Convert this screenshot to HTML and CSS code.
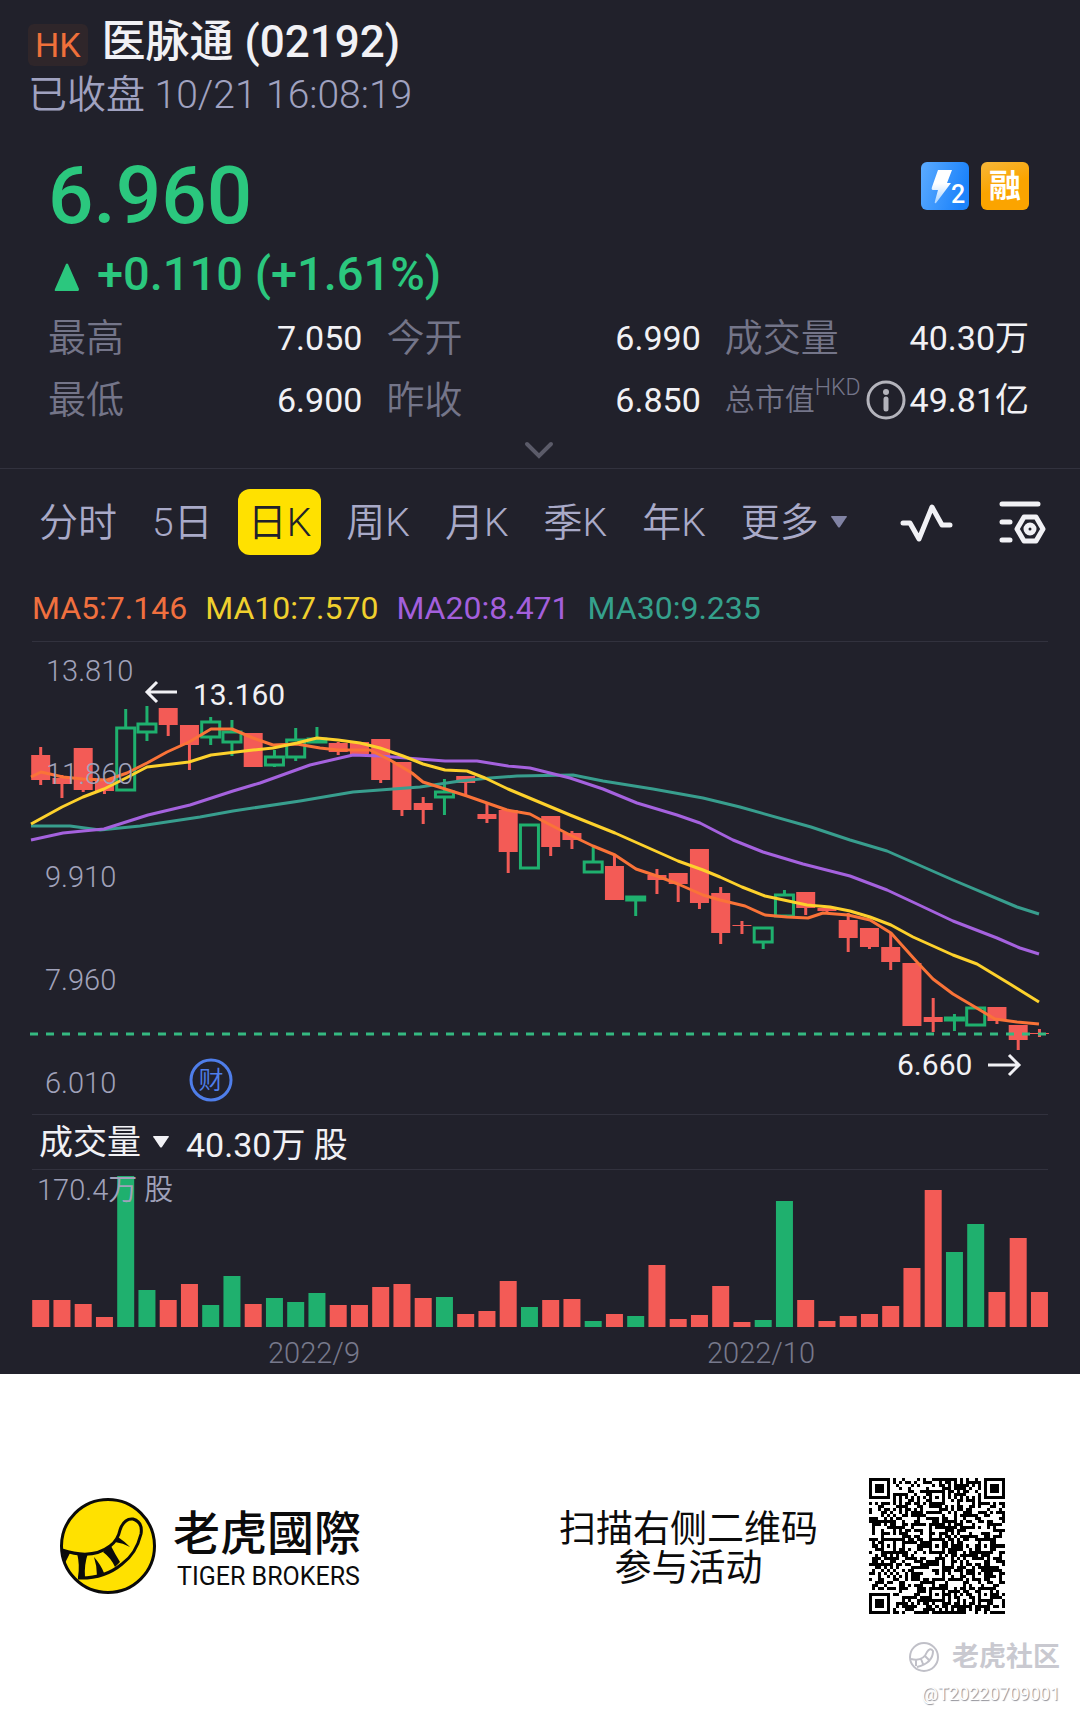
FILE: index.html
```
<!DOCTYPE html>
<html lang="zh-CN">
<head>
  <meta charset="UTF-8">
  <meta name="viewport" content="width=device-width, initial-scale=1.0">
  <title>医脉通 (02192)</title>
  <link rel="stylesheet" href="styles.css">
</head>
<body>
  <main class="quote">
    <header class="stock-header">
      <div class="stock-title">
        <span class="market">HK</span>
        <h1>医脉通 (02192)</h1>
      </div>
      <p class="stock-status">已收盘 10/21 16:08:19</p>
    </header>

    <section class="summary">
      <div class="price-row">
        <p class="price">6.960</p>
        <div class="badges">
          <svg class="badge" viewBox="0 0 48 48" role="img" aria-label="Level 2">
            <defs>
              <linearGradient id="blueBadge" x1="0" y1="0" x2="1" y2="0.3">
                <stop offset="0" stop-color="#5cabff"/>
                <stop offset="1" stop-color="#1c83fb"/>
              </linearGradient>
              <linearGradient id="boltFill" x1="0" y1="0" x2="0" y2="1">
                <stop offset="0.4" stop-color="#fff"/>
                <stop offset="1" stop-color="#a9d3ff"/>
              </linearGradient>
            </defs>
            <rect width="48" height="48" rx="6" fill="url(#blueBadge)"/>
            <path d="M17 8h14l-5 13h4L15 41q-2 1-1-2l3-11h-5q-2 0-1-3z" fill="url(#boltFill)"/>
            <text class="badge-digit" x="30" y="41">2</text>
          </svg>
          <span class="badge margin-badge">融</span>
        </div>
      </div>
      <p class="change">
        <svg class="up" viewBox="0 0 26 28" aria-hidden="true"><path d="M12 1q1-1 2 0l11 25q0 2-1 2H2q-2 0-1-2z"/></svg>
        +0.110 (+1.61%)
      </p>
      <dl class="stats">
        <div><dt>最高</dt><dd>7.050</dd></div>
        <div><dt>今开</dt><dd>6.990</dd></div>
        <div><dt>成交量</dt><dd>40.30万</dd></div>
        <div><dt>最低</dt><dd>6.900</dd></div>
        <div><dt>昨收</dt><dd>6.850</dd></div>
        <div>
          <dt class="market-cap">总市值<sup>HKD</sup></dt>
          <dd>
            <svg class="info" viewBox="0 0 40 40" aria-hidden="true">
              <circle cx="20" cy="20" r="18" fill="none" stroke="#b4b4bc" stroke-width="3"/>
              <circle cx="20" cy="12" r="3" fill="#b4b4bc"/>
              <path d="M20 19v10" stroke="#b4b4bc" stroke-width="5" stroke-linecap="round"/>
            </svg>49.81亿
          </dd>
        </div>
      </dl>
      <button class="expand" aria-label="展开">
        <svg viewBox="0 0 30 18"><path d="M3 3l12 12L27 3"/></svg>
      </button>
    </section>

    <nav class="toolbar">
      <div class="tabs">
        <button>分时</button>
        <button>5日</button>
        <button class="active">日K</button>
        <button>周K</button>
        <button>月K</button>
        <button>季K</button>
        <button>年K</button>
        <button aria-haspopup="true">更多<svg class="caret" viewBox="0 0 16 12"><path d="M1 0h14q2 0 0 2L9 11q-1 1-2 0L1 2Q-1 0 1 0z"/></svg></button>
      </div>
      <div class="tools">
        <button aria-label="指标">
          <svg viewBox="0 0 54 46"><path d="M3 24h7l9 16L32 8l10 18h8"/></svg>
        </button>
        <button aria-label="设置">
          <svg viewBox="0 0 48 46">
            <path d="M3 5h36M3 23h8M3 41h8M25 18h12l7 12-7 12H25l-7-12z"/>
            <circle cx="31" cy="30" r="4"/>
          </svg>
        </button>
      </div>
    </nav>

    <section class="charts">
      <ul class="averages">
        <li class="ma5">MA5:7.146</li>
        <li class="ma10">MA10:7.570</li>
        <li class="ma20">MA20:8.471</li>
        <li class="ma30">MA30:9.235</li>
      </ul>

      <svg class="chart" viewBox="32 642 1016 472" role="img" aria-label="日K">
        <g id="candles"></g>
        <g class="lines">
          <polyline class="line30" points="31,826 70,826 100,830 140,826 200,817 233,811 300,801 353,792 420,787 460,781 490,778 517,776 573,775 603,781 653,789 703,798 740,807 811,827 850,840 887,851 953,880 1017,907 1039,914"/>
          <polyline class="line20" points="31,840 63,833 83,831 104,829 148,815 190,805 233,791 260,783 310,765 353,755 380,756 445,761 477,761 508,766 530,768 570,778 603,789 637,803 677,815 700,823 733,840 763,852 803,864 850,876 887,890 917,904 953,921 997,938 1020,948 1039,954"/>
          <polyline class="line5" points="31,777 41,772 63,777 83,779 107,780 127,773 147,763 167,752 189,742 211,729 232,729 253,738 273,745 297,744 320,748 338,750 370,750 390,760 412,773 423,782 442,788 467,796 487,803 507,810 530,814 543,821 570,835 593,846 615,855 636,869 657,876 678,884 703,895 720,900 745,906 765,915 787,917 808,918 823,913 848,915 870,920 891,933 917,962 933,979 953,994 975,1007 995,1019 1017,1022 1039,1024"/>
          <polyline class="line10" points="31,824 62,807 83,797 104,789 126,778 147,767 189,762 211,755 253,750 273,748 297,743 317,738 338,740 360,743 380,748 403,756 423,764 445,770 467,771 485,778 508,789 570,815 615,833 678,861 703,870 720,877 742,887 765,896 807,905 830,907 850,911 870,917 891,925 913,937 953,955 977,964 1010,984 1039,1002"/>
        </g>
        <path class="last-price" d="M30 1034H1048"/>
        <g class="axis">
          <text x="46" y="681">13.810</text>
          <text x="46" y="784">11.860</text>
          <text x="45" y="887">9.910</text>
          <text x="45" y="990">7.960</text>
          <text x="45" y="1093">6.010</text>
        </g>
        <g class="marks">
          <path d="M177 692H147M157 682l-10 10 10 10"/>
          <text x="193" y="705">13.160</text>
          <path d="M988 1065h30M1009 1055l10 10-10 10"/>
          <text x="897" y="1075">6.660</text>
        </g>
        <g class="report">
          <circle cx="211" cy="1080" r="20"/>
          <text x="211" y="1089">财</text>
        </g>
      </svg>

      <div class="volume-header">
        <label class="indicator">
          <select aria-label="指标">
            <option>成交量</option>
          </select>
          <svg class="caret" viewBox="0 0 16 12"><path d="M1 0h14q2 0 0 2L9 11q-1 1-2 0L1 2Q-1 0 1 0z"/></svg>
        </label>
        <span>40.30万 股</span>
      </div>

      <svg class="chart" viewBox="32 1170 1016 204" role="img" aria-label="成交量">
        <g id="volumes"></g>
        <g class="axis">
          <text x="37" y="1200">170.4万 股</text>
        </g>
        <g class="dates">
          <text x="314" y="1363">2022/9</text>
          <text x="761" y="1363">2022/10</text>
        </g>
      </svg>
    </section>
  </main>

  <footer>
    <div class="share">
      <svg class="logo" viewBox="0 0 96 96" aria-hidden="true">
        <circle cx="48" cy="48" r="46.5" fill="#ffe100" stroke="#0b0b0b" stroke-width="3"/>
        <path d="M2 52Q32 62 50 48Q58 42 60 32Q64 20 73 21Q83 24 81 36Q76 56 62 66Q44 81 18 80" fill="none" stroke="#0b0b0b" stroke-width="3"/>
        <path d="M2 51l8 4-5 10zM17 55h11q-4 12-3 24h-7q2-12-1-24zM34 59q7 8 10 16l-7 3q0-10-3-19zM43 54l8-6q4 8 9 16l-5 5q-4-9-12-15zM55 44l3-5q6 4 12 10-7-4-15-5z" fill="#0b0b0b"/>
      </svg>
      <div class="brand">
        <strong>老虎國際</strong>
        <span>TIGER BROKERS</span>
      </div>
      <p class="scan">扫描右侧二维码<br>参与活动</p>
      <svg class="qr" id="qr" viewBox="0 0 45 45" shape-rendering="crispEdges" role="img" aria-label="二维码"></svg>
    </div>
    <div class="community">
      <p class="community-name">
        <svg viewBox="0 0 32 32" aria-hidden="true">
          <circle cx="16" cy="16" r="14"/>
          <path d="M3 18q12 3 16-7 3-5 6-1 0 12-16 16M8 19v6M13 18l2 5M17 15l4 4"/>
        </svg>
        老虎社区
      </p>
      <p class="community-user">@T20220709001</p>
    </div>
  </footer>

  <script>
    const STEP = 21.25;
    const FIRST = 40.7;

    // colour, high, body top, body bottom, low, volume
    const days = [
      ['r', 747, 755, 780, 785, 27], ['r', 775, 778, 784, 798, 27], ['r', 748, 748, 790, 792, 23],
      ['r', 779, 779, 791, 794, 10], ['g', 709, 727, 791, 791, 151], ['g', 706, 723, 733, 741, 37],
      ['r', 708, 708, 725, 736, 27], ['r', 725, 725, 745, 770, 43], ['g', 717, 721, 738, 745, 22],
      ['g', 720, 731, 743, 756, 51], ['r', 733, 733, 767, 767, 23], ['g', 750, 756, 766, 767, 29],
      ['g', 728, 739, 758, 761, 25], ['g', 727, 738, 743, 743, 34], ['r', 742, 743, 752, 755, 22],
      ['r', 742, 742, 754, 754, 22], ['r', 739, 739, 780, 783, 40], ['r', 762, 762, 810, 816, 43],
      ['r', 797, 803, 810, 824, 29], ['g', 779, 791, 798, 815, 30], ['r', 776, 776, 783, 795, 13],
      ['r', 803, 814, 819, 823, 16], ['r', 810, 810, 852, 873, 46], ['g', 824, 824, 869, 869, 20],
      ['r', 816, 816, 847, 856, 27], ['r', 831, 833, 840, 849, 28], ['g', 847, 861, 873, 873, 6],
      ['r', 854, 866, 900, 900, 13], ['g', 896, 896, 901, 916, 11], ['r', 869, 875, 880, 894, 62],
      ['r', 873, 873, 884, 902, 8], ['r', 849, 849, 903, 909, 12], ['r', 887, 893, 933, 944, 41],
      ['r', 921, 925, 926, 934, 5], ['g', 927, 927, 943, 949, 7], ['g', 890, 894, 917, 917, 126],
      ['r', 892, 892, 908, 915, 27], ['r', 906, 908, 911, 913, 6], ['r', 913, 920, 938, 952, 11],
      ['r', 928, 928, 947, 949, 13], ['r', 933, 947, 962, 970, 21], ['r', 963, 963, 1026, 1026, 59],
      ['r', 998, 1017, 1022, 1032, 137], ['g', 1014, 1017, 1021, 1031, 75], ['g', 1007, 1007, 1026, 1026, 103],
      ['r', 1007, 1007, 1021, 1024, 35], ['r', 1025, 1025, 1040, 1050, 89], ['r', 1029, 1033, 1034, 1037, 35]
    ];

    let candles = '';
    let volumes = '';
    days.forEach(function([color, high, top, bottom, low, volume], i) {
      const x = FIRST + i * STEP;
      candles += `<path class="wick ${color}" d="M${x} ${high}V${top}M${x} ${bottom}V${low}"/>`;
      if (color === 'g') {
        // rising days are hollow
        candles += `<rect class="body g" x="${x - 9}" y="${top + 1}" width="18" height="${bottom - top - 2}"/>`;
      } else {
        candles += `<rect class="body r" x="${x - 9.5}" y="${top}" width="19" height="${bottom - top}"/>`;
      }
      volumes += `<rect class="bar ${color}" x="${x - 8.5}" y="${1327 - volume}" width="17" height="${volume}"/>`;
    });
    document.getElementById('candles').innerHTML = candles;
    document.getElementById('volumes').innerHTML = volumes;

    // QR code
    const SIZE = 45;
    let seed = 2192;
    function next() {
      seed = (seed * 1103515245 + 12345) % 2147483648;
      return seed / 2147483648;
    }
    function ring(x, y, cx, cy) {
      return Math.max(Math.abs(x - cx), Math.abs(y - cy));
    }
    function dark(x, y) {
      const finders = [[3, 3], [SIZE - 4, 3], [3, SIZE - 4]];
      for (const [cx, cy] of finders) {
        const d = ring(x, y, cx, cy);
        if (d <= 4) return d < 2 || d === 3;
      }
      const aligns = [[22, 6], [6, 22], [22, 22], [38, 22], [22, 38], [38, 38]];
      for (const [cx, cy] of aligns) {
        const d = ring(x, y, cx, cy);
        if (d <= 2) return d !== 1;
      }
      if (x === 6 || y === 6) return (x + y) % 2 === 0;
      return next() < 0.52;
    }
    let modules = '';
    for (let y = 0; y < SIZE; y++) {
      for (let x = 0; x < SIZE; x++) {
        if (dark(x, y)) modules += `M${x} ${y}h1v1h-1z`;
      }
    }
    document.getElementById('qr').innerHTML = `<path d="${modules}"/>`;
  </script>
</body>
</html>
```

FILE: styles.css
```
* {
  box-sizing: border-box;
}
body {
  margin: 0;
  font-family: Roboto, "Noto Sans CJK SC", sans-serif;
  background-color: #fff;
  color: #f1f1f5;
}
h1, p, ul, dl, dd {
  margin: 0;
  padding: 0;
}
button, select {
  font: inherit;
  color: inherit;
  background: none;
  border: none;
  padding: 0;
  cursor: pointer;
}
svg {
  display: block;
}
.quote {
  background-color: #21212b;
}

/* Header */
.stock-header {
  padding: 18px 28px 0;
}
.stock-title {
  display: flex;
  align-items: center;
  gap: 14px;
  height: 48px;
}
.market {
  padding: 0 7px;
  border-radius: 6px;
  background-color: #2f262a;
  color: #f0703a;
  font-size: 34px;
  line-height: 42px;
  margin-top: 5px;
}
h1 {
  font-size: 44px;
  font-weight: 500;
  line-height: 48px;
}
.stock-status {
  color: #a0a2c0;
  font-size: 39px;
  font-weight: 350;
  line-height: 58px;
}

/* Price and day figures */
.summary {
  padding: 24px 51px 0 48px;
  border-bottom: 1px solid #32323e;
}
.price-row {
  display: flex;
  justify-content: space-between;
}
.price {
  color: #2bc77e;
  font-size: 80px;
  font-weight: 500;
  line-height: 96px;
}
.badges {
  display: flex;
  gap: 12px;
  padding-top: 14px;
}
.badge {
  width: 48px;
  height: 48px;
}
.badge-digit {
  fill: #fff;
  font-size: 25px;
  font-weight: 500;
}
.margin-badge {
  border-radius: 6px;
  background: linear-gradient(160deg, #f6b73a, #fba400 50%);
  color: #fff;
  font-size: 32px;
  font-weight: 700;
  line-height: 48px;
  text-align: center;
}
.change {
  display: flex;
  align-items: center;
  gap: 17px;
  margin-top: 3px;
  padding-left: 6px;
  color: #2bc77e;
  font-size: 47px;
  font-weight: 500;
  line-height: 54px;
}
.up {
  width: 26px;
  height: 28px;
  margin-top: 6px;
  fill: #2bc77e;
}
.stats {
  display: grid;
  grid-template-columns: 31fr 31fr 30fr;
  column-gap: 24px;
  margin-top: 6px;
  line-height: 62px;
}
.stats div {
  display: flex;
  justify-content: space-between;
  white-space: nowrap;
}
dt {
  color: #747589;
  font-size: 38px;
  font-weight: 350;
}
dd {
  display: flex;
  align-items: center;
  font-size: 34px;
}
.market-cap {
  font-size: 30px;
}
sup {
  font-size: 23px;
  line-height: 0;
  vertical-align: 15px;
}
.info {
  width: 40px;
  height: 40px;
  margin-right: 4px;
}
.expand {
  display: block;
  width: 60px;
  height: 37px;
  margin: 0 auto;
}
.expand svg {
  width: 30px;
  height: 18px;
  margin: 0 auto;
  fill: none;
  stroke: #5b5b69;
  stroke-width: 4;
  stroke-linecap: round;
}

/* Period tabs */
.toolbar {
  display: flex;
  align-items: center;
  justify-content: space-between;
  padding: 20px 33px 0 29px;
}
.tabs {
  display: flex;
  gap: 15px;
}
.tabs button {
  display: flex;
  align-items: center;
  height: 66px;
  padding: 0 10px 6px;
  border-radius: 12px;
  color: #a9aac8;
  font-size: 39px;
  font-weight: 350;
  white-space: nowrap;
}
.tabs .active {
  background-color: #ffe100;
  color: #21212b;
}
.caret {
  width: 16px;
  height: 12px;
  margin-left: 12px;
  fill: currentColor;
}
.tabs .caret {
  margin-top: 6px;
  fill: #8183a4;
}
.tools {
  display: flex;
  gap: 45px;
}
.tools svg {
  height: 46px;
  fill: none;
  stroke: #f1f1f5;
  stroke-width: 5;
  stroke-linecap: round;
  stroke-linejoin: round;
}

/* Charts */
.charts {
  padding: 20px 32px 0;
}
.averages {
  display: flex;
  gap: 18px;
  list-style: none;
  font-size: 32px;
  line-height: 66px;
}
.ma5 {
  color: #f0703f;
}
.ma10 {
  color: #f0d02e;
}
.ma20 {
  color: #a35fdc;
}
.ma30 {
  color: #35a08c;
}
.chart {
  width: 100%;
  border-top: 1px solid #32323e;
  overflow: visible;
}
.wick {
  fill: none;
  stroke-width: 3;
}
.wick.r {
  stroke: #f35b56;
}
.wick.g {
  stroke: #1fb06e;
}
.body.r, .bar.r {
  fill: #f35b56;
}
.body.g {
  fill: none;
  stroke: #1fb06e;
  stroke-width: 3;
}
.bar.g {
  fill: #1fb06e;
}
.lines {
  fill: none;
  stroke-width: 3;
  stroke-linejoin: round;
}
.line5 {
  stroke: #fa7338;
}
.line10 {
  stroke: #fdd12c;
}
.line20 {
  stroke: #a562de;
}
.line30 {
  stroke: #389e8e;
}
.last-price {
  stroke: #35b981;
  stroke-width: 3;
  stroke-dasharray: 8 8;
}
.axis {
  fill: #a0a2ba;
  font-size: 29px;
  font-weight: 350;
}
.marks {
  fill: #f1f1f5;
  font-size: 30px;
}
.marks path {
  fill: none;
  stroke: #f1f1f5;
  stroke-width: 3;
}
.report circle {
  fill: none;
  stroke: #4f7eea;
  stroke-width: 3;
}
.report text {
  fill: #4f7eea;
  font-size: 25px;
  font-weight: 350;
  text-anchor: middle;
}
.volume-header {
  display: flex;
  align-items: center;
  gap: 17px;
  height: 55px;
  padding-left: 7px;
  border-top: 1px solid #32323e;
  font-size: 34px;
}
.indicator {
  display: flex;
  align-items: center;
}
.indicator select {
  appearance: none;
}
.dates {
  fill: #77798c;
  font-size: 29px;
  font-weight: 350;
  text-anchor: middle;
}

/* Share footer */
footer {
  padding: 104px 20px 16px 60px;
  color: #0b0b0b;
}
.share {
  display: flex;
  align-items: center;
  padding-right: 55px;
}
.logo {
  width: 96px;
  height: 96px;
}
.brand {
  display: flex;
  flex-direction: column;
  margin-left: 17px;
}
.brand strong {
  font-family: "Noto Sans CJK TC", sans-serif;
  font-size: 47px;
  font-weight: 500;
  line-height: 60px;
}
.brand span {
  padding-left: 4px;
  font-size: 25px;
  line-height: 33px;
}
.scan {
  margin: 0 51px 0 auto;
  padding-top: 6px;
  font-size: 37px;
  line-height: 39px;
  text-align: center;
}
.qr {
  width: 136px;
  height: 136px;
}
.community {
  display: flex;
  flex-direction: column;
  align-items: flex-end;
  margin-top: 24px;
}
.community-name {
  display: flex;
  align-items: center;
  gap: 12px;
  color: #c9c9d0;
  font-size: 27px;
  font-weight: 700;
  line-height: 38px;
}
.community-name svg {
  width: 32px;
  height: 32px;
  fill: none;
  stroke: #c0c0c8;
  stroke-width: 2;
}
.community-user {
  color: #fff;
  font-size: 18px;
  line-height: 36px;
  text-shadow: 1px 1px 1px #8f8f96;
}
```
